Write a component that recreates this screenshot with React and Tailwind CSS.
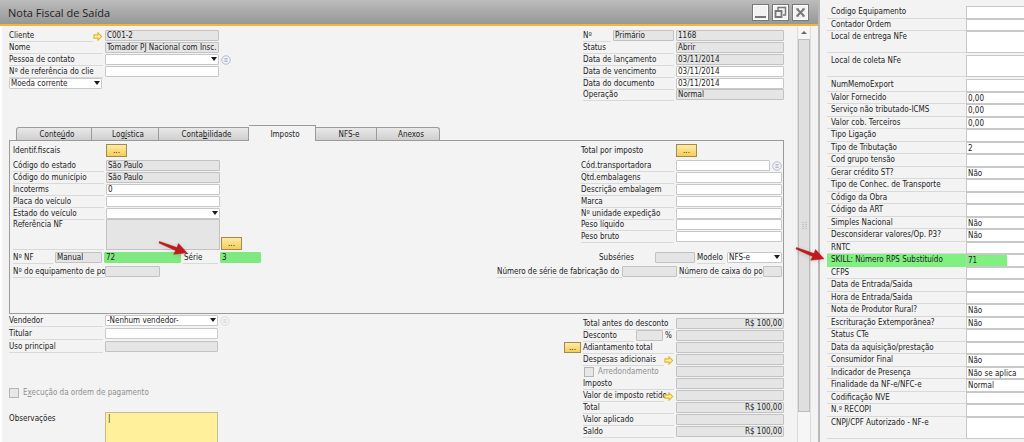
import React, { useId } from 'react';
import clsx from 'clsx';

const arrowPath = 'M1 3.5h5V1l4.5 4.5L6 10V7.500H1z';

// Small yellow link arrow
function LinkArrow() {
  return <svg viewBox="0 0 12 11" className="relative w-[10px] h-[9px] shrink-0" aria-hidden="true">
      <path d={arrowPath} fill="#fdf0a8" stroke="#e2b42c" strokeWidth="1.3" />
    </svg>;
}

// Round list picker
function ListIcon({ faded }) {
  return <svg viewBox="0 0 10 10" className={clsx('w-[10px] h-[10px] shrink-0', faded && 'opacity-40')} aria-hidden="true">
      <circle cx="5" cy="5" r="4.2" fill="#f4f6fb" stroke="#a3a9c0" strokeWidth="0.8" />
      <path d="M3.300 3.500h3.400M3.300 5h3.400M3.300 6.500h3.400" stroke="#a3a9c0" strokeWidth="0.8" />
    </svg>;
}

function RedArrow({ className }) {
  return <svg viewBox="0 0 30 18" className={clsx('absolute z-10 w-[30px] h-[18px] pointer-events-none drop-shadow-sm', className)} aria-hidden="true">
      <path d="M1.500 2.500L19 8.600L20.500 4.600L29 13.800L15.800 15.200L17.600 11.600L1 4z" fill="#c4191c" stroke="#a51518" strokeWidth="0.5" />
    </svg>;
}

function Field({ id, value = '', grey, green, right, className, label }) {
  return <input id={id} aria-label={label} defaultValue={value} readOnly={grey} className={clsx('relative h-[11px] min-w-0 rounded-[1px] border px-[1px] outline-none', green ? 'border-[#80e880] bg-[#80e880]' : grey ? 'border-[#c2c2c2] bg-[#e5e5e5]' : 'border-[#c8c8c8] bg-white', right && 'text-right', className || 'w-full')} />;
}

function Drop({ id, value, label, className }) {
  return <div className={clsx('relative h-[11px]', className)}>
      <select id={id} aria-label={label} className="block w-full h-full appearance-none rounded-[1px] border border-[#c8c8c8] bg-white px-[1px] leading-[9px] outline-none">
        <option>{value}</option>
      </select>
      <svg viewBox="0 0 6 4" className="absolute right-[2px] top-[3px] w-[6px] h-[4px] pointer-events-none" aria-hidden="true">
        <path d="M0 0h6L3 4z" fill="#1a1a1a" />
      </svg>
    </div>;
}

function Dots({ label, className }) {
  return <button type="button" aria-label={label} className={clsx('shrink-0 border border-[#a08a4c] bg-linear-to-b from-[#fdeaa6] to-[#f7cd55] leading-[8px]', className)}>
      ...
    </button>;
}

const labelClass = 'whitespace-nowrap border-b border-[#d9d9d9] h-[12px] leading-[12px]';

// Label on the left, control on the right
function Row({ label, arrow, select, after, labelWidth = 'w-[94px]', ...field }) {
  const id = useId();
  return <div className="flex h-[12px] nth-[5n]:h-[11px] items-start gap-[2px]">
      <div className={clsx('flex h-[12px] shrink-0 items-center', labelWidth)}>
        <label htmlFor={id} className={clsx(labelClass, 'flex-1 min-w-0')}>{label}</label>
        {arrow && <LinkArrow />}
      </div>
      <div className="relative flex flex-1 min-w-0 items-center gap-[2px]">
        {select ? <Drop id={id} value={field.value} className="w-full" /> : <Field id={id} {...field} />}
        {after}
      </div>
    </div>;
}

function WindowButton({ label, children }) {
  return <button type="button" aria-label={label} className="w-[17px] h-[17px] border border-[#777] bg-[#f2f2f2] shadow-[inset_0_0_0_1px_#fff]">
      <svg viewBox="0 0 15 15" className="block w-[15px] h-[15px]" fill="none" stroke="#777" aria-hidden="true">{children}</svg>
    </button>;
}

function TitleBar() {
  return <header className="flex h-[26px] items-center justify-between border-b-2 border-[#f5b52c] bg-linear-to-b from-[#bcbcbc] to-[#979797] pl-2 pr-[9px]">
      <h1 className="font-['Open_Sans',sans-serif] text-[11px] text-[#222]">Nota Fiscal de Saída</h1>
      <div className="flex gap-[3px]">
        <WindowButton label="Minimizar"><path d="M2 12h11" strokeWidth="2" /></WindowButton>
        <WindowButton label="Restaurar">
          <path d="M5 5V2.500h7.500V10H10" strokeWidth="1.400" />
          <path d="M2.500 6h6v6h-6z" strokeWidth="1.800" />
        </WindowButton>
        <WindowButton label="Fechar">
          <path d="M4 4l7 7M11 4l-7 7" strokeWidth="2" />
          <path d="M3 4h3M9 4h3M3 11h3M9 11h3" strokeWidth="1.200" />
        </WindowButton>
      </div>
    </header>;
}

function DocumentHeader() {
  return <section className="flex h-[99px] justify-between pt-1">
      <div className="w-[210px]">
        <Row label="Cliente" arrow value="C001-2" grey />
        <Row label="Nome" value="Tomador PJ Nacional com Insc." grey />
        <Row label="Pessoa de contato" select value="" after={<span className="absolute left-full ml-[2px] flex"><ListIcon /></span>} />
        <Row label="Nº de referência do clie" />
        <Drop label="Moeda" value="Moeda corrente" className="w-[93px]" />
      </div>
      <div className="w-[201px]">
        <div className="flex h-[12px] gap-[2px]">
          <label htmlFor="numero" className={clsx(labelClass, 'w-[28px]')}>Nº</label>
          <Field label="Série do número" value="Primário" grey className="w-[61px]" />
          <Field id="numero" value="1168" grey className="flex-1" />
        </div>
        <Row label="Status" labelWidth="w-[91px]" value="Abrir" grey />
        <Row label="Data de lançamento" labelWidth="w-[91px]" value="03/11/2014" grey />
        <Row label="Data de vencimento" labelWidth="w-[91px]" value="03/11/2014" />
        <Row label="Data do documento" labelWidth="w-[91px]" value="03/11/2014" />
        <Row label="Operação" labelWidth="w-[91px]" value="Normal" grey />
      </div>
    </section>;
}

const tabs = [
  { name: <>Conte<u>ú</u>do</>, width: 'w-[76px]' },
  { name: <>Log<u>í</u>stica</>, width: 'w-[67px]' },
  { name: <>Conta<u>b</u>ilidade</>, width: 'w-[90px]' },
  { name: 'Imposto', width: 'w-[67px]', active: true },
  { name: 'NFS-e', width: 'w-[61px]' },
  { name: 'Anexos', width: 'w-[63px]' }
];

function Tabs() {
  return <div role="tablist" className="flex h-[15px] items-end pl-[7px]">
      {tabs.map((tab, i) => <button key={i} type="button" role="tab" aria-selected={!!tab.active} className={clsx('border-t border-r border-[#9b9b9b] pl-[6px] pt-px first:border-l first:rounded-tl-[3px] last:rounded-tr-[3px]', tab.width, tab.active ? 'relative -mb-px h-[16px] bg-[#f3f3f3]' : 'h-[13px] bg-linear-to-b from-[#e9e9e9] to-[#cfcfcf]')}>
          {tab.name}
        </button>)}
    </div>;
}

function TaxPanel() {
  return <section className="h-[174px] border border-[#9b9b9b] pl-[3px] pr-px pt-[3px]">
      <div className="flex h-[108px] justify-between">
        <div className="w-[207px]">
          <div className="flex h-[16px] items-start">
            <span className="w-[93px] leading-[13px]">Identif.fiscais</span>
            <Dots label="Identif.fiscais" className="w-[21px] h-[13px]" />
          </div>
          <div>
            <Row label="Código do estado" labelWidth="w-[91px]" value="São Paulo" grey />
            <Row label="Código do município" labelWidth="w-[91px]" value="São Paulo" grey />
            <Row label="Incoterms" labelWidth="w-[91px]" value="0" />
            <Row label="Placa do veículo" labelWidth="w-[91px]" />
            <Row label="Estado do veículo" labelWidth="w-[91px]" select value="" />
          </div>
          <div className="relative flex h-[31px] gap-[2px]">
            <label htmlFor="referencia" className="w-[91px] border-b border-[#d9d9d9] leading-[12px]">Referência NF</label>
            <textarea id="referencia" readOnly className="flex-1 min-w-0 resize-none border border-[#c2c2c2] bg-[#e5e5e5]" />
            <Dots label="Referência NF" className="absolute left-full bottom-0 ml-px w-[21px] h-[13px]" />
          </div>
        </div>
        <div className="w-[201px]">
          <div className="flex h-[16px] items-start">
            <span className="w-[95px] leading-[13px]">Total por imposto</span>
            <Dots label="Total por imposto" className="w-[21px] h-[13px]" />
          </div>
          <div>
            <Row label="Cód.transportadora" labelWidth="w-[93px]" after={<ListIcon />} />
            <Row label="Qtd.embalagens" labelWidth="w-[93px]" />
            <Row label="Descrição embalagem" labelWidth="w-[93px]" />
            <Row label="Marca" labelWidth="w-[93px]" />
            <Row label="Nº unidade expedição" labelWidth="w-[93px]" />
            <Row label="Peso líquido" labelWidth="w-[93px]" />
            <Row label="Peso bruto" labelWidth="w-[93px]" />
          </div>
        </div>
      </div>
      <div className="flex h-[14px] items-start gap-[2px]">
        <label htmlFor="nf" className={clsx(labelClass, 'w-[40px]')}>Nº NF</label>
        <Field label="Tipo" value="Manual" grey className="w-[47px]" />
        <Field id="nf" value="72" green className="w-[77px]" />
        <label htmlFor="serie" className={clsx(labelClass, 'w-[35px] pl-px')}>Série</label>
        <Field id="serie" value="3" green className="w-[41px]" />
        <label htmlFor="sub" className="ml-auto w-[54px] leading-[12px]">Subséries</label>
        <Field id="sub" grey className="w-[40px]" />
        <label htmlFor="modelo" className={clsx(labelClass, 'w-[28px]')}>Modelo</label>
        <Drop id="modelo" value="NFS-e" className="w-[55px]" />
      </div>
      <div className="flex items-start">
        <label htmlFor="equip" className={clsx(labelClass, 'w-[92px]')}>Nº do equipamento de po</label>
        <Field id="equip" grey className="w-[55px]" />
        <label htmlFor="fabr" className={clsx(labelClass, 'ml-auto w-[125px]')}>Número de série de fabricação do</label>
        <Field id="fabr" grey className="w-[55px]" />
        <label htmlFor="caixa" className={clsx(labelClass, 'ml-[2px] w-[84px]')}>Número de caixa do po</label>
        <Field id="caixa" grey className="w-[19px]" />
      </div>
    </section>;
}

function Footer() {
  return <section className="flex flex-1 min-h-0 justify-between">
      <div className="w-[209px] pt-px">
        <div className="flex flex-col gap-px">
          <Row label="Vendedor" select value="-Nenhum vendedor-" after={<span className="absolute left-full ml-[2px] flex"><ListIcon faded /></span>} />
          <Row label="Titular" />
          <Row label="Uso principal" grey />
        </div>
        <label className="mt-[34px] flex items-center gap-1 text-[#909090]">
          <input type="checkbox" disabled className="w-[10px] h-[10px] appearance-none border border-[#b5b5b5] bg-[#e8e8e8]" />
          <span className="whitespace-nowrap">E<u>x</u>ecução da ordem de pagamento</span>
        </label>
        <div className="mt-[14px] flex gap-[2px]">
          <label htmlFor="obs" className="w-[94px] leading-[13px]">Observações</label>
          <textarea id="obs" defaultValue="|" className="h-[40px] flex-1 min-w-0 resize-none border border-[#c4bd8c] bg-[#fff09c] px-[2px] outline-none" />
        </div>
      </div>
      <div className="flex pt-1">
        <Dots label="Adiantamento total" className="mt-[24px] mr-[2px] w-[17px] h-[11px]" />
        <div className="w-[201px]">
          <Row label="Total antes do desconto" labelWidth="w-[91px]" value="R$ 100,00" grey right />
          <div className="flex h-[12px] items-start gap-[2px]">
            <label htmlFor="desc" className={clsx(labelClass, 'w-[51px]')}>Desconto</label>
            <Field id="desc" grey className="w-[27px]" />
            <span className="w-[9px] leading-[12px]">%</span>
            <Field label="Valor do desconto" grey className="flex-1" />
          </div>
          <Row label="Adiantamento total" labelWidth="w-[91px]" grey />
          <Row label="Despesas adicionais" labelWidth="w-[91px]" arrow grey />
          <div className="flex h-[12px] items-start gap-[2px]">
            <label className="flex w-[91px] items-center gap-1 pl-px leading-[11px] text-[#909090]">
              <input type="checkbox" disabled className="w-[10px] h-[10px] appearance-none border border-[#b5b5b5] bg-[#e8e8e8]" />
              Arredondamento
            </label>
            <Field label="Arredondamento" grey className="flex-1" />
          </div>
          <Row label="Imposto" labelWidth="w-[91px]" grey />
          <Row label="Valor de imposto retido" labelWidth="w-[91px]" arrow grey />
          <Row label="Total" labelWidth="w-[91px]" value="R$ 100,00" grey right />
          <Row label="Valor aplicado" labelWidth="w-[91px]" grey />
          <Row label="Saldo" labelWidth="w-[91px]" value="R$ 100,00" grey right />
        </div>
      </div>
    </section>;
}

function ScrollBar() {
  return <div className="flex w-[14px] flex-col border-x border-[#dcdcdc] bg-[#f6f6f6]">
      <div className="flex h-[13px] items-center justify-center">
        <svg viewBox="0 0 6 3" className="w-[6px] h-[3px]" aria-hidden="true"><path d="M0 3h6L3 0z" fill="#666" /></svg>
      </div>
      <div className="flex h-[373px] items-center justify-center border border-[#bdbdbd] bg-[#dfdfdf]">
        <svg viewBox="0 0 5 8" className="w-[5px] h-[8px]" aria-hidden="true"><path d="M1 0v8M4 0v8" stroke="#aaa" strokeDasharray="1 1" /></svg>
      </div>
    </div>;
}

const userFields = [
  ['NumMemoExport', ''],
  ['Valor Fornecido', '0,00'],
  ['Serviço não tributado-ICMS', '0,00'],
  ['Valor cob. Terceiros', '0,00'],
  ['Tipo Ligação', ''],
  ['Tipo de Tributação', '2'],
  ['Cod grupo tensão', ''],
  ['Gerar crédito ST?', 'Não'],
  ['Tipo de Conhec. de Transporte', ''],
  ['Código da Obra', ''],
  ['Código da ART', ''],
  ['Simples Nacional', 'Não'],
  ['Desconsiderar valores/Op. P3?', 'Não'],
  ['RNTC', ''],
  ['SKILL: Número RPS Substituído', '71', true],
  ['CFPS', ''],
  ['Data de Entrada/Saida', ''],
  ['Hora de Entrada/Saida', ''],
  ['Nota de Produtor Rural?', 'Não'],
  ['Escrituração Extemporânea?', 'Não'],
  ['Status CTe', ''],
  ['Data da aquisição/prestação', ''],
  ['Consumidor Final', 'Não'],
  ['Indicador de Presença', 'Não se aplica'],
  ['Finalidade da NF-e/NFC-e', 'Normal'],
  ['Codificação NVE', ''],
  ['N.º RECOPI', '']
];

function SideRow({ label, value, marked }) {
  const id = useId();
  return <div className="flex h-[13px] even:h-[12px]">
      <label htmlFor={id} className={clsx('w-[139px] shrink-0 whitespace-nowrap border-b pl-1 leading-[12px]', marked ? 'border-[#80f080] bg-[#80f080]' : 'border-[#d9d9d9]')}>{label}</label>
      <div className="relative flex-1 min-w-0">
        <input id={id} defaultValue={value} className={clsx('block w-full h-full border-y border-l border-[#c8c8c8] px-[1px] outline-none', marked ? 'bg-linear-to-r from-[#80f080] from-[40px] to-white to-[40px]' : 'bg-white')} />
      </div>
    </div>;
}

function SideArea({ label }) {
  const id = useId();
  return <div className="flex h-[24px] pb-[2px]">
      <label htmlFor={id} className="w-[139px] shrink-0 border-b border-[#d9d9d9] pl-1 leading-[12px]">{label}</label>
      <textarea id={id} className="block flex-1 min-w-0 resize-none border-y border-l border-[#c8c8c8] bg-white" />
    </div>;
}

export default function App() {
  return <div className="relative flex h-screen overflow-hidden bg-[#f3f3f3] font-['DejaVu_Sans_Condensed','DejaVu_Sans',sans-serif] text-[8px] leading-[11px] text-[#222]">
      <main className="flex flex-1 min-w-0 flex-col border-r-2 border-[#b9b9b9]">
        <TitleBar />
        <div className="flex flex-1 min-h-0 gap-[13px] border-l-2 border-white pr-[7px]">
          <div className="relative flex flex-1 min-w-0 flex-col pl-[7px]">
            <DocumentHeader />
            <Tabs />
            <TaxPanel />
            <Footer />
            <RedArrow className="left-[156px] top-[213px]" />
          </div>
          <ScrollBar />
        </div>
      </main>
      <aside className="relative w-[204px] shrink-0 pl-[7px] pt-[6px]">
        <SideRow label="Codigo Equipamento" value="" />
        <SideRow label="Contador Ordem" value="" />
        <SideArea label="Local de entrega NFe" />
        <SideArea label="Local de coleta NFe" />
        <div>
          {userFields.map(([label, value, marked]) => <SideRow key={label} label={label} value={value} marked={marked} />)}
        </div>
        <SideArea label="CNPJ/CPF Autorizado - NF-e" />
        <RedArrow className="-left-[25px] top-[245px]" />
      </aside>
    </div>;
}
